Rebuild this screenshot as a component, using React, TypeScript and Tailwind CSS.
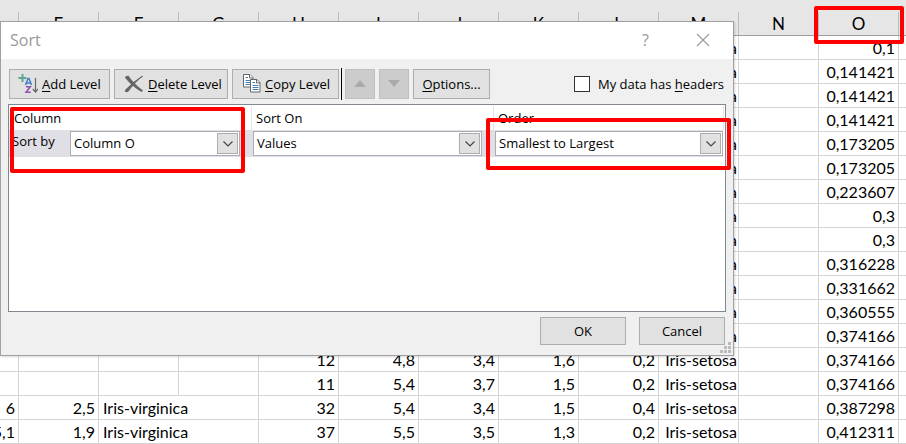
import React from "react";

const letters = ["E", "F", "G", "H", "I", "J", "K", "L", "M", "N", "O"];

const distances = [
  "0,1", "0,141421", "0,141421", "0,141421", "0,173205", "0,173205", "0,223607", "0,3", "0,3",
  "0,316228", "0,331662", "0,360555", "0,374166", "0,374166", "0,374166", "0,387298", "0,412311",
];

type Row = { d?: string; e?: string; f?: string; nums?: string[] };

const tail: Record<number, Row> = {
  13: { nums: ["12", "4,8", "3,4", "1,6", "0,2"] },
  14: { nums: ["11", "5,4", "3,7", "1,5", "0,2"] },
  15: { d: "6", e: "2,5", f: "Iris-virginica", nums: ["32", "5,4", "3,4", "1,5", "0,4"] },
  16: { d: "5,1", e: "1,9", f: "Iris-virginica", nums: ["37", "5,5", "3,5", "1,3", "0,2"] },
};

const cell = "h-6 border-r border-b border-[#d4d4d4] p-0 whitespace-nowrap";
const num = cell + " pr-[3px] text-right";

function Sheet() {
  return (
    <table className="w-full table-fixed border-separate border-spacing-0 text-base leading-[23px]">
      <colgroup>
        <col className="w-[19px]" />
        {letters.map((l) => (
          <col key={l} className="w-20" />
        ))}
        <col />
      </colgroup>
      <thead>
        <tr className="bg-[#e6e6e6] text-[17px]">
          <td className="h-9 border-b border-[#9e9e9e] p-0 pt-3">
            <div className="h-[23px] border-r border-[#bdbdbd]" />
          </td>
          {letters.map((l) => (
            <th key={l} scope="col" className="h-9 border-b border-[#9e9e9e] p-0 pt-3 font-normal">
              <div className="h-[23px] border-r border-[#bdbdbd]">{l}</div>
            </th>
          ))}
          <td className="border-b border-[#9e9e9e]" />
        </tr>
      </thead>
      <tbody>
        {distances.map((dist, i) => {
          const row = tail[i] ?? {};
          const nums = row.nums ?? ["", "", "", "", ""];
          return (
            <tr key={i}>
              <td className={cell}>
                <div className="flex justify-end overflow-hidden pr-[3px]">{row.d}</div>
              </td>
              <td className={num}>{row.e}</td>
              {row.f ? (
                <td colSpan={2} className={cell + " pl-1"}>{row.f}</td>
              ) : (
                <>
                  <td className={cell} />
                  <td className={cell} />
                </>
              )}
              {nums.map((n, j) => (
                <td key={j} className={num}>{n}</td>
              ))}
              <td className={cell + " pr-px text-right"}>Iris-setosa</td>
              <td className={cell} />
              <td className={num}>{dist}</td>
              <td className="border-b border-[#d4d4d4] p-0" />
            </tr>
          );
        })}
      </tbody>
    </table>
  );
}

const button = "flex h-[30px] items-center border border-[#adadad] bg-[#e1e1e1]";

function Combo({ label, value }: { label: string; value: string }) {
  return (
    <div className="relative h-[25px] min-w-0 flex-1 border border-[#abadb3] bg-white">
      <select aria-label={label} className="h-full w-full appearance-none bg-transparent pr-6 pb-px pl-[3px] outline-none">
        <option>{value}</option>
      </select>
      <span className="pointer-events-none absolute inset-y-px right-px flex w-[21px] items-center justify-center border border-[#adadad] bg-[#e1e1e1]">
        <svg width="10" height="6" viewBox="0 0 10 6" fill="none" stroke="#444" strokeWidth="1.2">
          <path d="M.5 .5 5 5 9.5 .5" />
        </svg>
      </span>
    </div>
  );
}

function AddIcon() {
  return (
    <svg width="20" height="20" viewBox="0 0 20 20" fill="none">
      <path d="M4.500 0v8M.5 4h8" stroke="#5fa88d" strokeWidth="2" />
      <path d="M7.500 11 10 4.500h1L13.500 11M8.500 9h4" stroke="#3f7fc8" strokeWidth="1.500" />
      <path d="M8 12.700h4.300L8 18.300h4.700" stroke="#8f52b0" strokeWidth="1.500" />
      <path d="M17.500 4v14M14.800 15l2.700 3 2.500-3" stroke="#666" strokeWidth="1.200" />
    </svg>
  );
}

function DeleteIcon() {
  return (
    <svg width="20" height="18" viewBox="0 0 20 18" fill="#666">
      <path d="M.8 2.500Q2 .2 4.500 .8 9 8 19 15.500L17.500 17Q8 11.500 .8 2.500Z" />
      <path d="M19 1.500Q12 6 4.500 16.500 3 18 .8 16.500 .5 15 2 14 10 6 18 .8Z" />
    </svg>
  );
}

function CopyIcon() {
  return (
    <svg width="18" height="19" viewBox="0 0 18 19" fill="#fff">
      <path d="M.5 .5h6.500l3 3v9.500H.5Z" stroke="#666" />
      <path d="M6.500 .5v3.500H10" stroke="#666" />
      <path d="M2.500 3.500h2.500M2.500 6.500h5M2.500 8.500h5M2.500 10.500h5" stroke="#3f7fb8" />
      <path d="M7.500 5.500H14l3 3v9.500H7.500Z" stroke="#666" />
      <path d="M13.500 5.500V9H17" fill="none" stroke="#666" />
      <path d="M9.500 8.500h2.500M9.500 11.500h6M9.500 13.500h6M9.500 15.500h6" stroke="#3f7fb8" />
    </svg>
  );
}

function SortDialog() {
  return (
    <div
      role="dialog"
      aria-label="Sort"
      className="absolute top-[21px] left-0 w-[734px] border border-[#a0a0a0] bg-[#f0f0f0] font-['Open_Sans','Noto_Sans',sans-serif] text-[13px] leading-5 text-black shadow-[1px_1px_2px_rgba(0,0,0,0.15)]"
    >
      <div className="flex h-[37px] items-center bg-white pr-[23px] pb-px pl-[9px] text-[#999]">
        <h1 className="flex-1 text-base">Sort</h1>
        <button aria-label="Help" className="mr-[47px] text-base">?</button>
        <button aria-label="Close">
          <svg width="14" height="14" viewBox="0 0 14 14" stroke="#999" strokeWidth="1.100">
            <path d="M1 1 13 13M13 1 1 13" />
          </svg>
        </button>
      </div>

      <div className="flex h-[45px] items-center gap-1 pt-1 pr-[9px] pl-2">
        <button className={button + " w-[101px] gap-1 pl-2"}>
          <AddIcon />
          <span><u className="underline-offset-2">A</u>dd Level</span>
        </button>
        <button className={button + " w-[114px] gap-1 pl-[9px]"}>
          <DeleteIcon />
          <span><u className="underline-offset-2">D</u>elete Level</span>
        </button>
        <button className={button + " w-[107px] gap-1 pl-[10px]"}>
          <CopyIcon />
          <span><u className="underline-offset-2">C</u>opy Level</span>
        </button>
        <div className="-mx-[2px] h-8 w-px bg-black" />
        <button disabled aria-label="Move up" className="ml-px flex h-[30px] w-[30px] items-center justify-center border border-[#bfbfbf] bg-[#ccc]">
          <svg width="12" height="7" viewBox="0 0 12 7" fill="#aaa"><path d="M0 7 6 0 12 7Z" /></svg>
        </button>
        <button disabled aria-label="Move down" className="flex h-[30px] w-[30px] items-center justify-center border border-[#bfbfbf] bg-[#ccc]">
          <svg width="12" height="7" viewBox="0 0 12 7" fill="#aaa"><path d="M0 0 6 7 12 0Z" /></svg>
        </button>
        <button className={button + " w-[77px] justify-center"}>
          <span><u className="underline-offset-2">O</u>ptions...</span>
        </button>
        <label className="ml-auto flex items-center gap-2">
          <input type="checkbox" className="h-4 w-4 appearance-none border border-[#333] bg-white" />
          <span>My data has <u className="underline-offset-2">h</u>eaders</span>
        </label>
      </div>

      <div className="mx-[7px] h-[208px] border border-[#828790] bg-white">
        <div className="grid h-[25px] grid-cols-[243px_242px_230px] pt-px leading-6">
          <div className="border-r border-[#e5e5e5] pl-[5px]">Column</div>
          <div className="border-r border-[#e5e5e5] pl-1">Sort On</div>
          <div className="border-r border-[#e5e5e5] pl-1">Order</div>
        </div>
        <div className="mr-[2px] grid h-[27px] grid-cols-[243px_242px_230px] items-center bg-[#e0dfe5]">
          <div className="flex pr-3 pl-[3px]">
            <span className="w-[58px]">Sort by</span>
            <Combo label="Sort by column" value="Column O" />
          </div>
          <div className="flex pr-3 pl-px"><Combo label="Sort on" value="Values" /></div>
          <div className="flex pr-px pl-px"><Combo label="Order" value="Smallest to Largest" /></div>
        </div>
      </div>

      <div className="relative flex h-[43px] items-start justify-end gap-[13px] pt-[5px] pr-2">
        <button className="h-7 w-[86px] border border-[#adadad] bg-[#e1e1e1]">OK</button>
        <button className="h-7 w-[86px] border border-[#adadad] bg-[#e1e1e1]">Cancel</button>
        <svg className="absolute right-[2px] bottom-[2px]" width="11" height="11" viewBox="0 0 11 11" fill="#bbb">
          <path d="M8 0h3v3H8ZM4 4h3v3H4ZM8 4h3v3H8ZM0 8h3v3H0ZM4 8h3v3H4ZM8 8h3v3H8Z" />
        </svg>
      </div>
    </div>
  );
}

export default function App() {
  return (
    <main className="relative overflow-hidden bg-white font-['Lato','Liberation_Sans',sans-serif] text-black">
      <Sheet />
      <SortDialog />
      <div className="pointer-events-none absolute top-[107px] left-[10px] h-[66px] w-[235px] rounded-xs border-4 border-[#f00]" />
      <div className="pointer-events-none absolute top-[118px] left-[486px] h-[52px] w-[245px] rounded-xs border-4 border-[#f00]" />
      <div className="pointer-events-none absolute top-[6px] left-[814px] h-[38px] w-[90px] rounded-xs border-4 border-[#f00]" />
    </main>
  );
}
